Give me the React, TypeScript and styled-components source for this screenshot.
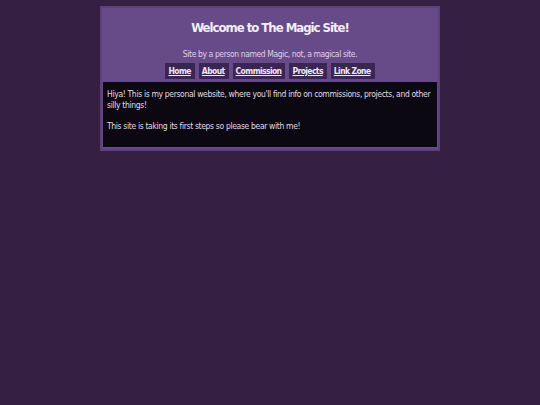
import React from 'react';
import styled, { createGlobalStyle } from 'styled-components';

const GlobalStyle = createGlobalStyle`
  html, body {
    margin: 0;
    padding: 0;
    background-color: #352043;
    font-family: 'DejaVu Sans Condensed', 'DejaVu Sans', sans-serif;
  }
`;

const Page = styled.div`
  min-height: 405px;
  padding-top: 6px;
`;

const Frame = styled.div`
  width: 334px;
  margin: 0 auto;
  background-color: #674b88;
  border: 2px solid #5c417a;
  padding: 0 1px 2px 1px;
`;

const Header = styled.header`
  text-align: center;
  padding-top: 11px;
`;

const Title = styled.h1`
  margin: 0;
  font-size: 13px;
  font-weight: bold;
  letter-spacing: -1px;
  color: #f4eef8;
  line-height: 18px;
`;

const Subtitle = styled.p`
  margin: 11px 0 0 0;
  font-size: 8.5px;
  letter-spacing: -0.4px;
  color: #ddd0e8;
  line-height: 12px;
`;

const Nav = styled.nav`
  display: flex;
  justify-content: center;
  gap: 4px;
  margin-top: 3px;
  padding-bottom: 3px;
`;

const NavLink = styled.a`
  background-color: #3b2552;
  color: #efe6f5;
  font-weight: bold;
  font-size: 8.5px;
  letter-spacing: -0.6px;
  text-decoration: underline;
  padding: 0 4px 0 3px;
  height: 16px;
  line-height: 16px;
  display: block;
`;

const Content = styled.main`
  background-color: #0c0811;
  color: #e2dae9;
  font-size: 8.5px;
  letter-spacing: -0.34px;
  line-height: 11px;
  padding: 7px 3px 10px 4px;
  min-height: 48px;
`;

const Para = styled.p`
  margin: 0 0 10px 0;
  &:last-child {
    margin-bottom: 0;
  }
`;

const links = ['Home', 'About', 'Commission', 'Projects', 'Link Zone'];

const App = () => (
  <>
    <GlobalStyle />
    <Page>
      <Frame>
        <Header>
          <Title>Welcome to The Magic Site!</Title>
          <Subtitle>Site by a person named Magic, not, a magical site.</Subtitle>
        </Header>
        <Nav>
          {links.map((label) => (
            <NavLink key={label} href="#">
              {label}
            </NavLink>
          ))}
        </Nav>
        <Content>
          <Para>
            Hiya! This is my personal website, where you'll find info on commissions, projects, and other
            silly things!
          </Para>
          <Para>This site is taking its first steps so please bear with me!</Para>
        </Content>
      </Frame>
    </Page>
  </>
);

export default App;
